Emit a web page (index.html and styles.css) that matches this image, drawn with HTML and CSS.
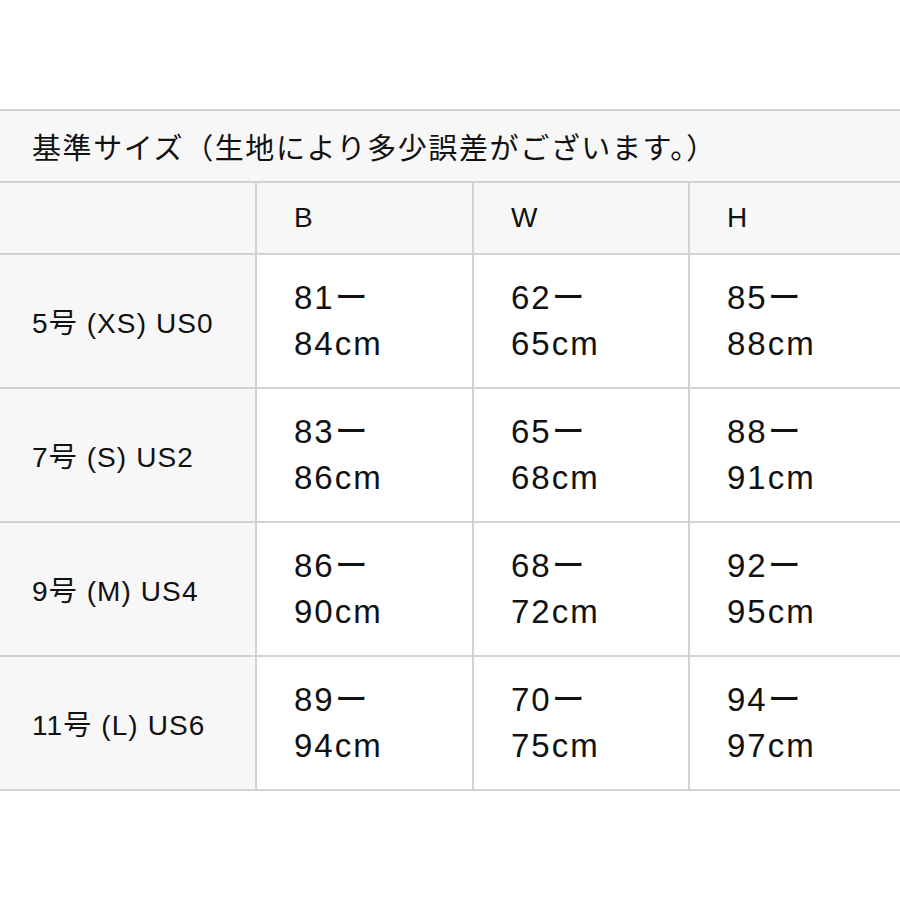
FILE: index.html
```html
<!DOCTYPE html>
<html lang="ja">
<head>
<meta charset="utf-8">
<title>基準サイズ</title>
<link rel="stylesheet" href="styles.css">
</head>
<body>
<div class="size-table">
  <div class="cell title">基準サイズ（生地により多少誤差がございます。）</div>
  <div class="cell head"></div>
  <div class="cell colhead">B</div>
  <div class="cell colhead">W</div>
  <div class="cell colhead">H</div>

  <div class="cell label">5号 (XS) US0</div>
  <div class="cell data">81ー<br>84cm</div>
  <div class="cell data">62ー<br>65cm</div>
  <div class="cell data">85ー<br>88cm</div>

  <div class="cell label">7号 (S) US2</div>
  <div class="cell data">83ー<br>86cm</div>
  <div class="cell data">65ー<br>68cm</div>
  <div class="cell data">88ー<br>91cm</div>

  <div class="cell label">9号 (M) US4</div>
  <div class="cell data">86ー<br>90cm</div>
  <div class="cell data">68ー<br>72cm</div>
  <div class="cell data">92ー<br>95cm</div>

  <div class="cell label">11号 (L) US6</div>
  <div class="cell data">89ー<br>94cm</div>
  <div class="cell data">70ー<br>75cm</div>
  <div class="cell data">94ー<br>97cm</div>
</div>
</body>
</html>
```

FILE: styles.css
```css
html, body {
  margin: 0;
  padding: 0;
  background: #ffffff;
}

body {
  font-family: "Liberation Sans", "Noto Sans CJK JP", sans-serif;
  color: #111111;
  padding-top: 109px;
}

.size-table {
  display: grid;
  grid-template-columns: 259px 215px 214px 215px;
  grid-template-rows: 70px 70px 132px 132px 132px 132px;
  gap: 2px;
  padding: 2px 0;
  background: #d2d2d2;
  margin-left: -4px;
  width: 909px;
}

.cell {
  display: flex;
  align-items: center;
  padding-left: 36px;
  background: #ffffff;
  box-sizing: border-box;
}

.title {
  grid-column: 1 / -1;
  background: #f7f7f7;
  font-size: 29px;
  letter-spacing: 1.6px;
  padding-left: 36px;
}

.head,
.colhead,
.label {
  background: #f7f7f7;
}

.colhead {
  font-size: 28px;
  padding-left: 37px;
}

.label {
  font-size: 28px;
  letter-spacing: 1.1px;
  padding-left: 36px;
}

.data {
  font-size: 33px;
  line-height: 46px;
  letter-spacing: 2px;
  padding-left: 37px;
}
```
